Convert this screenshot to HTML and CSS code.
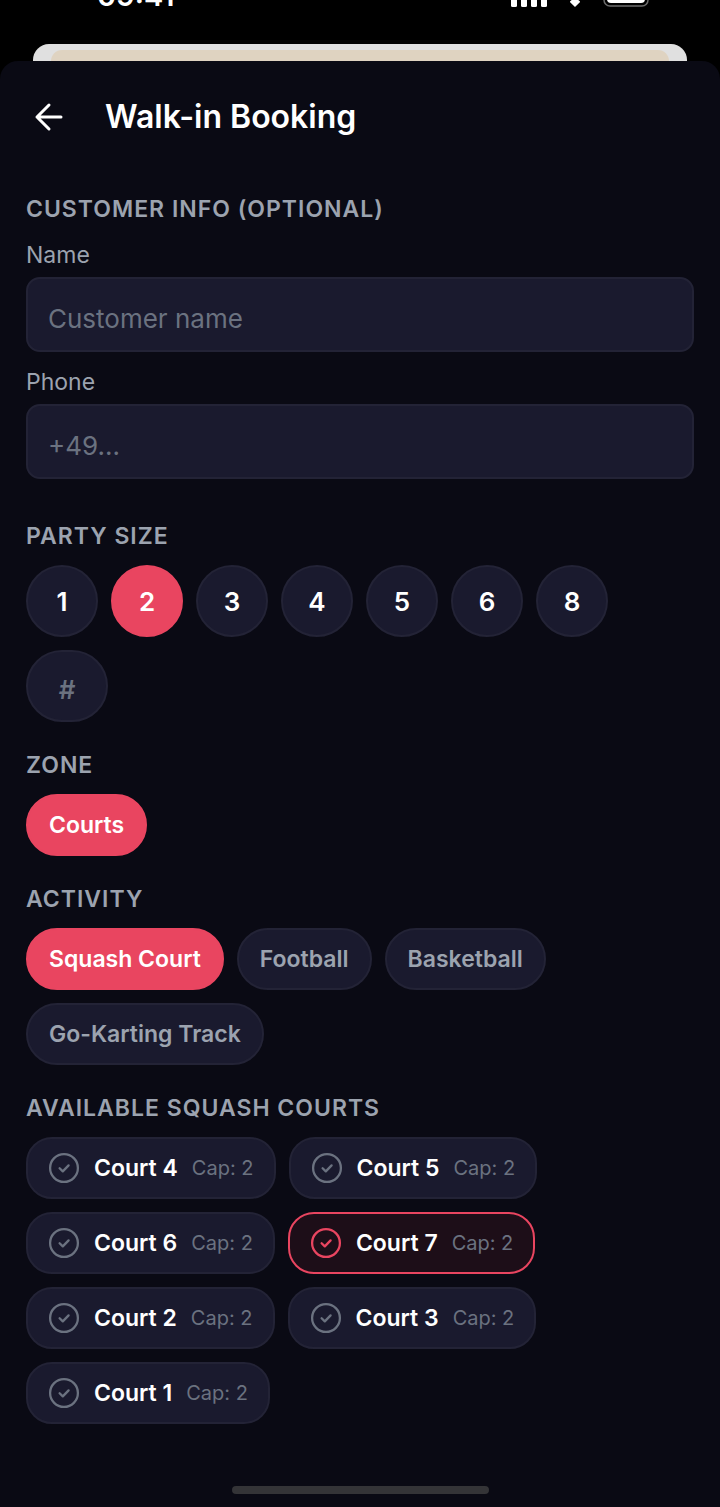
FILE: index.html
```html
<!DOCTYPE html>
<html lang="en">
<head>
  <meta charset="UTF-8" />
  <meta name="viewport" content="width=device-width, initial-scale=1.0" />
  <title>Walk-in Booking</title>
  <link rel="stylesheet" href="styles.css">
</head>
<body>
  <!-- Shared icons -->
  <svg class="sprite" aria-hidden="true">
    <symbol id="check" viewBox="0 0 32 32">
      <circle cx="16" cy="16" r="13.9" />
      <path d="M11.600 16.200l3.200 3.200 5.800-6" />
    </symbol>
  </svg>

  <!-- Status bar -->
  <div class="status-bar">
    <span class="time">09:41</span>
    <div class="status-icons">
      <svg width="36" height="20" viewBox="0 0 36 20" fill="#fff" aria-hidden="true">
        <rect x="0" y="11" width="6" height="9" rx="1.5" />
        <rect x="10" y="8" width="6" height="12" rx="1.5" />
        <rect x="20" y="4" width="6" height="16" rx="1.5" />
        <rect x="30" y="0" width="6" height="20" rx="1.5" />
      </svg>
      <svg width="28" height="20" viewBox="0 0 28 20" fill="#fff" aria-hidden="true">
        <path d="M14 20l-4.600-4.600a1 1 0 0 1 0-1.500q4.600-3.600 9.200 0a1 1 0 0 1 0 1.500z" />
        <path d="M4 8q10-9 20 0" fill="none" stroke="#fff" stroke-width="3" />
      </svg>
      <svg width="50" height="22" viewBox="0 0 50 22" aria-hidden="true">
        <rect x="1" y="1" width="44" height="20" rx="6" fill="none" stroke="#6c6c6c" stroke-width="1.500" />
        <rect x="4" y="4" width="38" height="14" rx="4" fill="#fff" />
      </svg>
    </div>
  </div>

  <!-- Screen behind the sheet -->
  <div class="behind"><div class="behind-card"></div></div>

  <main class="sheet">
    <header class="header">
      <a class="back" href="#" aria-label="Back">
        <svg width="30" height="30" viewBox="0 0 30 30" aria-hidden="true">
          <path d="M27 15H3M15 3L3 15l12 12" />
        </svg>
      </a>
      <h1>Walk-in Booking</h1>
    </header>

    <form class="form">
      <section class="section customer">
        <h2>CUSTOMER INFO (OPTIONAL)</h2>
        <div class="field">
          <label for="name">Name</label>
          <input type="text" id="name" placeholder="Customer name">
        </div>
        <div class="field">
          <label for="phone">Phone</label>
          <input type="tel" id="phone" placeholder="+49...">
        </div>
      </section>

      <section class="section">
        <h2>PARTY SIZE</h2>
        <div class="options">
          <button type="button" class="size">1</button>
          <button type="button" class="size selected" aria-pressed="true">2</button>
          <button type="button" class="size">3</button>
          <button type="button" class="size">4</button>
          <button type="button" class="size">5</button>
          <button type="button" class="size">6</button>
          <button type="button" class="size">8</button>
          <input type="text" class="size-input" inputmode="numeric" placeholder="#" aria-label="Other party size">
        </div>
      </section>

      <section class="section">
        <h2>ZONE</h2>
        <div class="options">
          <button type="button" class="chip selected" aria-pressed="true">Courts</button>
        </div>
      </section>

      <section class="section">
        <h2>ACTIVITY</h2>
        <div class="options">
          <button type="button" class="chip selected" aria-pressed="true">Squash Court</button>
          <button type="button" class="chip">Football</button>
          <button type="button" class="chip">Basketball</button>
          <button type="button" class="chip">Go-Karting Track</button>
        </div>
      </section>

      <section class="section">
        <h2>AVAILABLE SQUASH COURTS</h2>
        <div class="options courts">
          <button type="button" class="court"><svg class="check"><use href="#check" /></svg><span>Court 4</span><span class="cap">Cap: 2</span></button>
          <button type="button" class="court"><svg class="check"><use href="#check" /></svg><span>Court 5</span><span class="cap">Cap: 2</span></button>
          <button type="button" class="court"><svg class="check"><use href="#check" /></svg><span>Court 6</span><span class="cap">Cap: 2</span></button>
          <button type="button" class="court active" aria-pressed="true"><svg class="check"><use href="#check" /></svg><span>Court 7</span><span class="cap">Cap: 2</span></button>
          <button type="button" class="court"><svg class="check"><use href="#check" /></svg><span>Court 2</span><span class="cap">Cap: 2</span></button>
          <button type="button" class="court"><svg class="check"><use href="#check" /></svg><span>Court 3</span><span class="cap">Cap: 2</span></button>
          <button type="button" class="court"><svg class="check"><use href="#check" /></svg><span>Court 1</span><span class="cap">Cap: 2</span></button>
        </div>
      </section>
    </form>

    <div class="home-indicator"></div>
  </main>
</body>
</html>
```

FILE: styles.css
```css
* {
  box-sizing: border-box;
}
body {
  margin: 0;
  min-height: 100vh;
  display: flex;
  flex-direction: column;
  background: #000;
  color: #fff;
  font-family: Inter, sans-serif;
}
button, input {
  font-family: inherit;
  margin: 0;
}
.sprite {
  display: none;
}

/* Status bar */
.status-bar {
  display: flex;
  justify-content: space-between;
  align-items: flex-end;
  height: 7px;
  margin-bottom: 37px;
  padding: 0 67px 0 97px;
}
.time {
  font-size: 29px;
  line-height: 22px;
  font-weight: 600;
}
.status-icons {
  display: flex;
  align-items: flex-end;
  gap: 14px;
}

.behind {
  height: 17px;
  margin: 0 33px;
  padding: 6px 18px 0;
  background: #e0e0e0;
  border-radius: 16px 16px 0 0;
}
.behind-card {
  height: 11px;
  background: #dfd3c1;
  border-radius: 11px 11px 0 0;
}

/* Sheet */
.sheet {
  flex: 1;
  display: flex;
  flex-direction: column;
  background: #0a0a14;
  border-radius: 18px 18px 0 0;
}
.header {
  display: flex;
  align-items: center;
  gap: 41px;
  height: 111px;
  padding: 0 34px;
}
.back {
  display: flex;
}
.back svg {
  fill: none;
  stroke: #fff;
  stroke-width: 3;
  stroke-linecap: round;
  stroke-linejoin: round;
}
h1 {
  margin: 0;
  font-size: 32px;
  line-height: 40px;
  font-weight: 600;
}
.form {
  display: flex;
  flex-direction: column;
  gap: 27px;
  padding: 21px 26px 0;
}
.section h2 {
  margin: 0 0 13px;
  color: #9ca3af;
  font-size: 23px;
  line-height: 32px;
  font-weight: 600;
  letter-spacing: 1px;
}
.customer {
  display: flex;
  flex-direction: column;
  gap: 15px;
  margin-bottom: 14px;
}
.customer h2 {
  margin: 0;
}
.field {
  display: flex;
  flex-direction: column;
  gap: 7px;
}
.field label {
  color: #9ca3af;
  font-size: 23px;
  line-height: 30px;
}
.field input {
  width: 100%;
  height: 75px;
  padding: 8px 20px 0;
  background: #1a1a2e;
  border: 2px solid #232336;
  border-radius: 14px;
  color: #fff;
  font-size: 26px;
}
input::placeholder {
  color: #6b7280;
  opacity: 1;
}

/* Pills */
.options {
  display: flex;
  flex-wrap: wrap;
  gap: 13px;
}
.size, .size-input, .chip, .court {
  background: #1a1a2e;
  border: 2px solid #232336;
  border-radius: 36px;
  color: #fff;
  font-weight: 600;
}
.size {
  width: 72px;
  height: 72px;
  padding: 0;
  font-size: 26px;
}
.size-input {
  width: 82px;
  height: 72px;
  padding: 6px 0 0;
  font-size: 26px;
  text-align: center;
}
.chip {
  height: 62px;
  padding: 0 21px;
  color: #9ca3af;
  font-size: 23px;
}
.selected {
  background: #e94560;
  border-color: #e94560;
  color: #fff;
}
.courts {
  max-width: 560px;
}
.court {
  display: flex;
  align-items: center;
  gap: 14px;
  height: 62px;
  padding: 0 20px;
  border-radius: 26px;
  font-size: 23px;
}
.check {
  width: 32px;
  height: 32px;
  fill: none;
  stroke: #6b7280;
  stroke-width: 2.3;
  stroke-linecap: round;
  stroke-linejoin: round;
}
.cap {
  color: #6b7280;
  font-size: 20px;
  font-weight: 400;
}
.court.active {
  background: #1d0e18;
  border-color: #e94560;
}
.court.active .check {
  stroke: #e94560;
}

.home-indicator {
  align-self: center;
  width: 257px;
  height: 8px;
  margin: auto 0 13px;
  border-radius: 4px;
  background: #343437;
}
```
